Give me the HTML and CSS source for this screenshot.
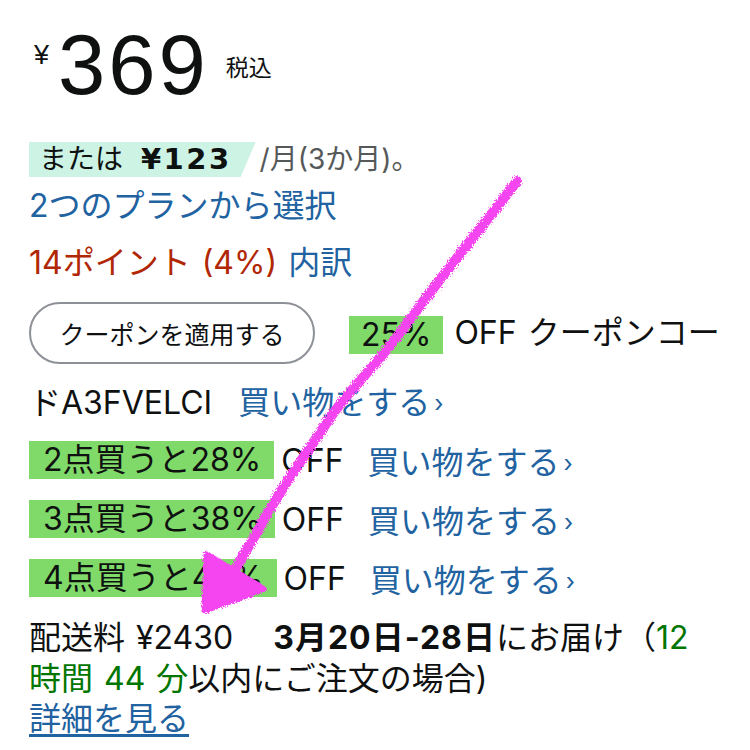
FILE: index.html
```html
<!DOCTYPE html>
<html lang="ja">
<head>
  <meta charset="UTF-8" />
  <title>価格</title>
  <link rel="stylesheet" href="styles.css">
</head>
<body>
  <div class="page">
    <!-- 価格 -->
    <div class="price">
      <span class="price-symbol">¥</span>
      <span class="price-whole">369</span>
      <span class="price-tax">税込</span>
    </div>

    <!-- 分割払い -->
    <div class="installment">
      <span class="installment-tag">または <b class="installment-amount">¥123</b></span><span class="installment-term">/月(3か月)。</span>
    </div>
    <div class="plans"><a class="link" href="#">2つのプランから選択</a></div>

    <!-- ポイント -->
    <div class="points"><span class="points-red">14ポイント (4%)</span> <a class="link" href="#">内訳</a></div>

    <!-- クーポン -->
    <div class="coupon">
      <button class="coupon-button">クーポンを適用する</button><span class="deal">25%</span> OFF クーポンコードA3FVELCI <a class="link shop" href="#">買い物をする<span class="chevron">›</span></a>
    </div>

    <!-- まとめ買い -->
    <div class="bulk-row"><span class="deal">2点買うと28%</span><span class="off">OFF</span><a class="link shop" href="#">買い物をする<span class="chevron">›</span></a></div>
    <div class="bulk-row"><span class="deal">3点買うと38%</span><span class="off">OFF</span><a class="link shop" href="#">買い物をする<span class="chevron">›</span></a></div>
    <div class="bulk-row"><span class="deal">4点買うと48%</span><span class="off">OFF</span><a class="link shop" href="#">買い物をする<span class="chevron">›</span></a></div>

    <!-- 配送 -->
    <div class="delivery">
      配送料 ¥2430<span class="delivery-date">3月20日-28日</span>にお届け（<span class="delivery-green">12時間 44 分</span>以内にご注文の場合)
    </div>
    <a class="link details" href="#">詳細を見る</a>

    <!-- 手書きの矢印 -->
    <svg class="annotation" width="750" height="750" viewBox="0 0 750 750">
      <defs>
        <filter id="rough" x="-10%" y="-10%" width="120%" height="120%">
          <feTurbulence type="fractalNoise" baseFrequency="0.8" numOctaves="2" result="noise" />
          <feDisplacementMap in="SourceGraphic" in2="noise" scale="5" />
        </filter>
      </defs>
      <g filter="url(#rough)" fill="#f445f0" stroke="#f445f0">
        <path d="M517 181 C 480 230, 430 290, 400 333 C 370 372, 345 395, 330 418 C 305 455, 280 490, 262 523 C 248 548, 236 568, 222 592" fill="none" stroke-width="10" stroke-linecap="round" stroke-linejoin="round" />
        <polygon points="207,555 263,589 205,610" stroke-width="7" stroke-linejoin="round" />
      </g>
    </svg>
  </div>
</body>
</html>
```

FILE: styles.css
```css
/* ページ全体 */
body {
  margin: 0;
  background: #fff;
  color: #0f1111;
  font-family: Inter, "Noto Sans CJK JP", sans-serif;
  font-size: 32px;
  word-spacing: 2px;
}

.page {
  position: relative;
  width: 750px;
  height: 750px;
  box-sizing: border-box;
  padding: 0 26px 0 29px;
  overflow: hidden;
}

.link {
  color: #2162a1;
  text-decoration: none;
}

.chevron {
  font-size: 24px;
  margin-left: 4px;
  vertical-align: 2px;
}

/* 価格 */
.price {
  display: flex;
  align-items: flex-start;
  height: 90px;
  margin-top: 22px;
  font-family: "Liberation Sans", "Noto Sans CJK JP", sans-serif;
}

.price-symbol {
  font-size: 27px;
  line-height: 1;
  margin: 20px 0 0 5px;
}

.price-whole {
  font-size: 85px;
  line-height: 1;
  letter-spacing: 3px;
  margin-left: 9px;
}

.price-tax {
  font-size: 23px;
  line-height: 1;
  margin: 35px 0 0 17px;
}

/* 分割払い */
.installment {
  margin-top: 30px;
  height: 35px;
  line-height: 35px;
  font-size: 28px;
}

.installment-tag {
  display: inline-block;
  padding: 0 24px 0 10px;
  background: #cdf3e4;
  clip-path: polygon(0 0, 100% 0, calc(100% - 15px) 100%, 0 100%);
}

.installment-amount {
  font-family: "DejaVu Sans", "Noto Sans CJK JP", sans-serif;
  font-size: 29px;
  letter-spacing: 2.5px;
  margin-left: 8px;
}

.installment-term {
  color: #565959;
  margin-left: 4px;
}

.plans {
  margin-top: 9px;
  line-height: 40px;
}

.points {
  margin-top: 17px;
  line-height: 40px;
}

.points-red {
  color: #b12704;
}

/* クーポン */
.coupon {
  margin-top: 10px;
  line-height: 52px;
}

.coupon-button {
  width: 286px;
  height: 62px;
  margin: 9px 34px 13px 0;
  vertical-align: middle;
  background: #fff;
  border: 2px solid #8d9096;
  border-radius: 31px;
  color: #0f1111;
  font-family: "Liberation Sans", "Noto Sans CJK JP", sans-serif;
  font-size: 25px;
}

.deal {
  display: inline-block;
  height: 38px;
  line-height: 38px;
  padding: 0 12px;
  background: #7fda69;
  vertical-align: middle;
  word-spacing: 0;
}

.shop {
  margin-left: 15px;
}

/* まとめ買い */
.bulk-row {
  display: flex;
  align-items: center;
  height: 38px;
  margin-top: 21px;
}

.coupon + .bulk-row {
  margin-top: 11px;
}

.bulk-row .deal {
  height: 38px;
  line-height: 38px;
  padding: 0 13px 0 14px;
}

.off {
  margin-left: 7px;
}

.bulk-row .shop {
  margin-left: 24px;
}

/* 配送 */
.delivery {
  margin-top: 20px;
  margin-right: 20px;
  line-height: 41px;
}

.delivery-date {
  font-weight: bold;
  letter-spacing: 1px;
  margin-left: 40px;
}

.delivery-green {
  color: #007600;
}

.details {
  display: inline-block;
  margin-top: 1px;
  line-height: 38px;
  text-decoration: underline;
  text-underline-offset: 4px;
}

/* 注釈の矢印 */
.annotation {
  position: absolute;
  top: 0;
  left: 0;
  pointer-events: none;
}
```
